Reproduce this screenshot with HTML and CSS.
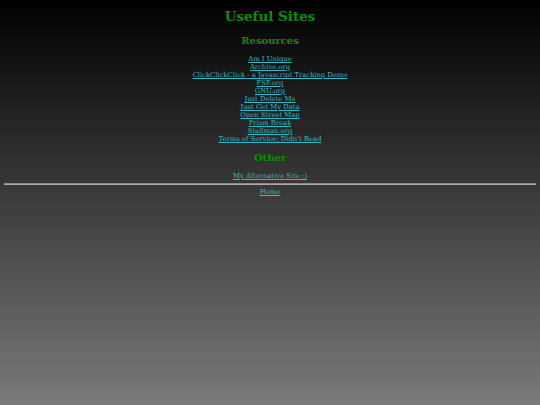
FILE: index.html
```html
<!DOCTYPE html>
<html>
<head>
<meta charset="utf-8">
<link rel="stylesheet" href="styles.css">
</head>
<body>
<h1 class="title">Useful Sites</h1>
<h2 class="section">Resources</h2>
<ul class="links">
<li><a href="#">Am I Unique</a></li>
<li><a href="#">Archive.org</a></li>
<li><a href="#">ClickClickClick - a Javascript Tracking Demo</a></li>
<li><a href="#">FSF.org</a></li>
<li><a href="#">GNU.org</a></li>
<li><a href="#">Just Delete Me</a></li>
<li><a href="#">Just Get My Data</a></li>
<li><a href="#">Open Street Map</a></li>
<li><a href="#">Prism Break</a></li>
<li><a href="#">Stallman.org</a></li>
<li><a href="#">Terms of Service; Didn't Read</a></li>
</ul>
<h2 class="section other">Other</h2>
<ul class="links alt">
<li><a href="#">My Alternative Site :)</a></li>
</ul>
<hr class="rule">
<div class="home"><a href="#">Home</a></div>
</body>
</html>
```
FILE: styles.css
```css
html {
  min-height: 100%;
  background: linear-gradient(to bottom, #000 0%, #7a7a7a 100%);
}
body {
  margin: 0;
  padding: 4px 4px;
  min-height: 397px;
  font-family: "DejaVu Serif", serif;
  text-align: center;
}
.title {
  margin: 2px 0 0;
  font-size: 13.5px;
  line-height: 20px;
  color: #0c8c0c;
}
.section {
  margin: 7px 0 0;
  font-size: 10px;
  line-height: 15px;
  color: #0c8c0c;
}
.links {
  list-style: none;
  margin: 7px 0 0;
  padding: 0;
  font-size: 6.8px;
  line-height: 8px;
}
.links a, .home a {
  color: #33bcbc;
}
.other {
  margin-top: 7px;
}
.alt {
  margin-top: 7px;
}
.rule {
  margin: 3px 0 0;
  height: 0;
  border: 0;
  border-top: 1px solid #8a8a8a;
  border-bottom: 1px solid #a8a8a8;
}
.home {
  margin-top: 3px;
  font-size: 6.8px;
  line-height: 8px;
}
```
